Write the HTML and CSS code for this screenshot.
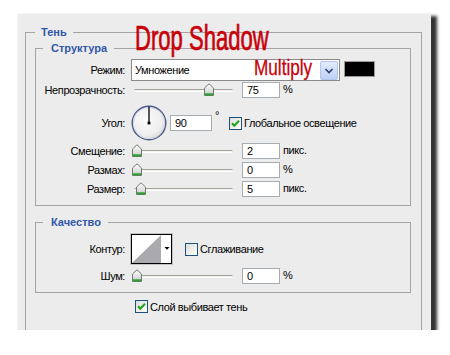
FILE: index.html
```html
<!DOCTYPE html>
<html lang="ru">
<head>
<meta charset="utf-8">
<title>Тень</title>
<link rel="stylesheet" href="styles.css">
</head>
<body>
<div class="panel">
  <fieldset class="group outer">
    <legend class="lg-outer">Тень</legend>

    <fieldset class="group inner structure">
      <legend class="lg-inner">Структура</legend>

      <div class="row r-mode">
        <span class="lbl">Режим:</span>
        <div class="ctl">
          <div class="select">
            <span class="sel-text">Умножение</span>
            <span class="drop-btn">
              <svg width="18" height="19" viewBox="0 0 18 19"><path d="M5.5 8 L9 11.5 L12.5 8" fill="none" stroke="#2c3d6e" stroke-width="1.6"/></svg>
            </span>
          </div>
          <span class="swatch"></span>
        </div>
      </div>

      <div class="row r-opacity">
        <span class="lbl">Непрозрачность:</span>
        <div class="ctl">
          <div class="slider"><span class="track"></span><span class="thumb" style="left:73px"><svg width="10" height="13" viewBox="0 0 10 13"><defs><linearGradient id="tg1" x1="0" y1="0" x2="0" y2="1"><stop offset="0" stop-color="#ffffff"/><stop offset="1" stop-color="#c9c9c9"/></linearGradient></defs><path d="M0.5 12.5 V5 L5 0.8 L9.5 5 V12.5 Z" fill="url(#tg1)" stroke="#6f7a6f"/><rect x="1" y="10.3" width="8" height="2" fill="#2da02d"/></svg></span></div>
          <span class="field">75</span><span class="unit">%</span>
        </div>
      </div>

      <div class="row r-angle">
        <span class="lbl">Угол:</span>
        <div class="ctl">
          <svg class="dial" width="36" height="36" viewBox="0 0 36 36"><defs><radialGradient id="dg" cx="0.42" cy="0.4" r="0.65"><stop offset="0" stop-color="#fbfbfb"/><stop offset="0.7" stop-color="#eeeeee"/><stop offset="1" stop-color="#d6d6d6"/></radialGradient></defs><circle cx="18" cy="18" r="16.8" fill="url(#dg)" stroke="#4b5c88" stroke-width="1.4"/><circle cx="18" cy="18" r="15.6" fill="none" stroke="#c9d0e0" stroke-width="0.8"/><line x1="18" y1="18" x2="18" y2="1.8" stroke="#000" stroke-width="1.3"/><rect x="16.6" y="16.6" width="2.8" height="2.8" fill="#000"/></svg>
          <span class="field angle-field">90</span><span class="deg">°</span>
          <span class="check-wrap global">
            <svg class="cb" width="13" height="13" viewBox="0 0 13 13"><defs><linearGradient id="cg1" x1="0" y1="0" x2="1" y2="1"><stop offset="0" stop-color="#dcdcd6"/><stop offset="1" stop-color="#ffffff"/></linearGradient></defs><rect x="0.5" y="0.5" width="12" height="12" fill="url(#cg1)" stroke="#1c5180"/><path d="M3 6.3 L5.3 8.8 L10 3.8" fill="none" stroke="#21a121" stroke-width="2"/></svg>
            <span class="cb-text">Глобальное освещение</span>
          </span>
        </div>
      </div>

      <div class="row r-std">
        <span class="lbl">Смещение:</span>
        <div class="ctl">
          <div class="slider"><span class="track"></span><span class="thumb" style="left:1px"><svg width="10" height="13" viewBox="0 0 10 13"><defs><linearGradient id="tg2" x1="0" y1="0" x2="0" y2="1"><stop offset="0" stop-color="#ffffff"/><stop offset="1" stop-color="#c9c9c9"/></linearGradient></defs><path d="M0.5 12.5 V5 L5 0.8 L9.5 5 V12.5 Z" fill="url(#tg2)" stroke="#6f7a6f"/><rect x="1" y="10.3" width="8" height="2" fill="#2da02d"/></svg></span></div>
          <span class="field">2</span><span class="unit">пикс.</span>
        </div>
      </div>

      <div class="row r-std">
        <span class="lbl">Размах:</span>
        <div class="ctl">
          <div class="slider"><span class="track"></span><span class="thumb" style="left:1px"><svg width="10" height="13" viewBox="0 0 10 13"><defs><linearGradient id="tg3" x1="0" y1="0" x2="0" y2="1"><stop offset="0" stop-color="#ffffff"/><stop offset="1" stop-color="#c9c9c9"/></linearGradient></defs><path d="M0.5 12.5 V5 L5 0.8 L9.5 5 V12.5 Z" fill="url(#tg3)" stroke="#6f7a6f"/><rect x="1" y="10.3" width="8" height="2" fill="#2da02d"/></svg></span></div>
          <span class="field">0</span><span class="unit">%</span>
        </div>
      </div>

      <div class="row r-std">
        <span class="lbl">Размер:</span>
        <div class="ctl">
          <div class="slider"><span class="track"></span><span class="thumb" style="left:5px"><svg width="10" height="13" viewBox="0 0 10 13"><defs><linearGradient id="tg4" x1="0" y1="0" x2="0" y2="1"><stop offset="0" stop-color="#ffffff"/><stop offset="1" stop-color="#c9c9c9"/></linearGradient></defs><path d="M0.5 12.5 V5 L5 0.8 L9.5 5 V12.5 Z" fill="url(#tg4)" stroke="#6f7a6f"/><rect x="1" y="10.3" width="8" height="2" fill="#2da02d"/></svg></span></div>
          <span class="field">5</span><span class="unit">пикс.</span>
        </div>
      </div>
    </fieldset>

    <fieldset class="group inner quality">
      <legend class="lg-inner">Качество</legend>

      <div class="row r-contour">
        <span class="lbl">Контур:</span>
        <div class="ctl">
          <svg class="contour" width="43" height="32" viewBox="0 0 43 32"><rect x="0.5" y="0.5" width="42" height="31" fill="#fff" stroke="#c4c4c4"/><rect x="1.5" y="1.5" width="40" height="29" fill="#fff" stroke="#000"/><polygon points="2,30 31,2 31,30" fill="#a9a9ae"/><polygon points="34.5,14 39.5,14 37,16.8" fill="#000"/></svg>
          <span class="check-wrap smooth">
            <svg class="cb" width="13" height="13" viewBox="0 0 13 13"><defs><linearGradient id="cg2" x1="0" y1="0" x2="1" y2="1"><stop offset="0" stop-color="#dcdcd6"/><stop offset="1" stop-color="#ffffff"/></linearGradient></defs><rect x="0.5" y="0.5" width="12" height="12" fill="url(#cg2)" stroke="#1c5180"/></svg>
            <span class="cb-text">Сглаживание</span>
          </span>
        </div>
      </div>

      <div class="row r-noise">
        <span class="lbl">Шум:</span>
        <div class="ctl">
          <div class="slider"><span class="track"></span><span class="thumb" style="left:1px"><svg width="10" height="13" viewBox="0 0 10 13"><defs><linearGradient id="tg5" x1="0" y1="0" x2="0" y2="1"><stop offset="0" stop-color="#ffffff"/><stop offset="1" stop-color="#c9c9c9"/></linearGradient></defs><path d="M0.5 12.5 V5 L5 0.8 L9.5 5 V12.5 Z" fill="url(#tg5)" stroke="#6f7a6f"/><rect x="1" y="10.3" width="8" height="2" fill="#2da02d"/></svg></span></div>
          <span class="field">0</span><span class="unit">%</span>
        </div>
      </div>
    </fieldset>

    <div class="knockout">
      <span class="check-wrap">
        <svg class="cb" width="13" height="13" viewBox="0 0 13 13"><defs><linearGradient id="cg3" x1="0" y1="0" x2="1" y2="1"><stop offset="0" stop-color="#dcdcd6"/><stop offset="1" stop-color="#ffffff"/></linearGradient></defs><rect x="0.5" y="0.5" width="12" height="12" fill="url(#cg3)" stroke="#1c5180"/><path d="M3 6.3 L5.3 8.8 L10 3.8" fill="none" stroke="#21a121" stroke-width="2"/></svg>
        <span class="cb-text">Слой выбивает тень</span>
      </span>
    </div>
  </fieldset>

  <span class="note note-title">Drop Shadow</span>
  <span class="note note-mode">Multiply</span>
</div>
</body>
</html>
```

FILE: styles.css
```css
* {
  box-sizing: border-box;
}

body {
  margin: 0;
  background: #ffffff;
  font-family: "Liberation Sans", Arial, sans-serif;
  font-size: 11px;
  letter-spacing: -0.4px;
  color: #000000;
}

.panel {
  position: relative;
  margin: 14px 0 0 18px;
  width: 413px;
  height: 316px;
  background: #ececec;
  overflow: hidden;
  box-shadow: 4px 4px 3px 2px rgba(30, 30, 30, 0.9);
}

.group {
  margin: 0;
  border: 1px solid #a4a4a4;
  min-width: 0;
}

.outer {
  margin: 11px 0 0 7px;
  width: 397px;
  padding: 2px 10px 60px 9px;
}

legend {
  font-weight: bold;
  color: #3158a8;
  line-height: 14px;
  letter-spacing: 0;
}

.lg-outer {
  margin-left: 0;
  padding: 0 6px 0 6px;
}

.lg-inner {
  margin-left: 7px;
  padding: 0 7px 0 8px;
}

.inner {
  padding: 4px 0 8px 0;
}

.quality {
  margin-top: 9px;
}

.row {
  display: grid;
  grid-template-columns: 89px 1fr;
  column-gap: 6px;
  align-items: center;
}

.lbl {
  text-align: right;
  white-space: nowrap;
}

.ctl {
  display: flex;
  align-items: center;
}

.r-mode {
  height: 22px;
}

.r-opacity {
  margin-top: 1px;
  height: 16px;
}

.r-angle {
  margin-top: 7px;
  height: 35px;
}

.r-std {
  margin-top: 3px;
  height: 16px;
}

.r-contour {
  height: 32px;
}

.r-noise {
  margin-top: 3px;
  height: 16px;
}

/* select */
.select {
  display: flex;
  align-items: center;
  width: 209px;
  height: 22px;
  background: #ffffff;
  border: 1px solid #8a8a8a;
  padding: 0 1px 0 3px;
}

.sel-text {
  flex: 1;
}

.drop-btn {
  display: block;
  width: 18px;
  height: 19px;
  border: 1px solid #b1c5ef;
  border-radius: 2px;
  background: linear-gradient(to bottom, #e2ebfd, #bed0f4);
}

.drop-btn svg {
  display: block;
  margin: -1px;
}

.swatch {
  display: block;
  width: 31px;
  height: 16px;
  margin-left: 4px;
  margin-top: -2px;
  background: #000000;
  border: 1px solid #9a9a9a;
}

/* slider */
.slider {
  position: relative;
  display: flex;
  align-items: center;
  width: 102px;
  height: 16px;
  margin-right: 9px;
}

.track {
  display: block;
  width: 99px;
  height: 3px;
  margin-left: 3px;
  border-radius: 2px;
  background: #f2f2ee;
  border-top: 1px solid #a3a39b;
  border-bottom: 1px solid #ffffff;
}

.thumb {
  position: absolute;
  top: 1px;
  width: 10px;
  height: 13px;
}

.thumb svg {
  display: block;
}

/* text fields */
.field {
  display: block;
  width: 38px;
  height: 16px;
  line-height: 14px;
  padding-left: 4px;
  background: #ffffff;
  border: 1px solid #a5acb2;
}

.unit {
  margin-left: 3px;
  margin-top: -3px;
}

.dial {
  display: block;
  margin-left: 0;
}

.angle-field {
  width: 42px;
  margin-left: 3px;
}

.deg {
  align-self: flex-start;
  margin: 5px 0 0 3px;
  line-height: 11px;
}

.check-wrap {
  display: flex;
  align-items: center;
}

.cb {
  display: block;
  flex: none;
}

.cb-text {
  margin-left: 2px;
  white-space: nowrap;
}

.global {
  margin-left: 10px;
}

.contour {
  display: block;
  margin-left: -1px;
}

.smooth {
  margin-left: 12px;
}

.knockout {
  margin-top: 7px;
  padding-left: 100px;
}

/* red annotations drawn over the dialog */
.note {
  position: absolute;
  color: #c8000a;
  font-family: "Liberation Sans", Arial, sans-serif;
  letter-spacing: 0;
  white-space: nowrap;
  transform-origin: 0 0;
}

.note-title {
  left: 117px;
  top: 6px;
  font-size: 35px;
  line-height: 35px;
  -webkit-text-stroke: 0.7px #c8000a;
  transform: scaleX(0.63);
}

.note-mode {
  left: 236px;
  top: 43px;
  font-size: 22px;
  line-height: 22px;
  -webkit-text-stroke: 0.3px #c8000a;
  transform: scaleX(0.78);
}
```
